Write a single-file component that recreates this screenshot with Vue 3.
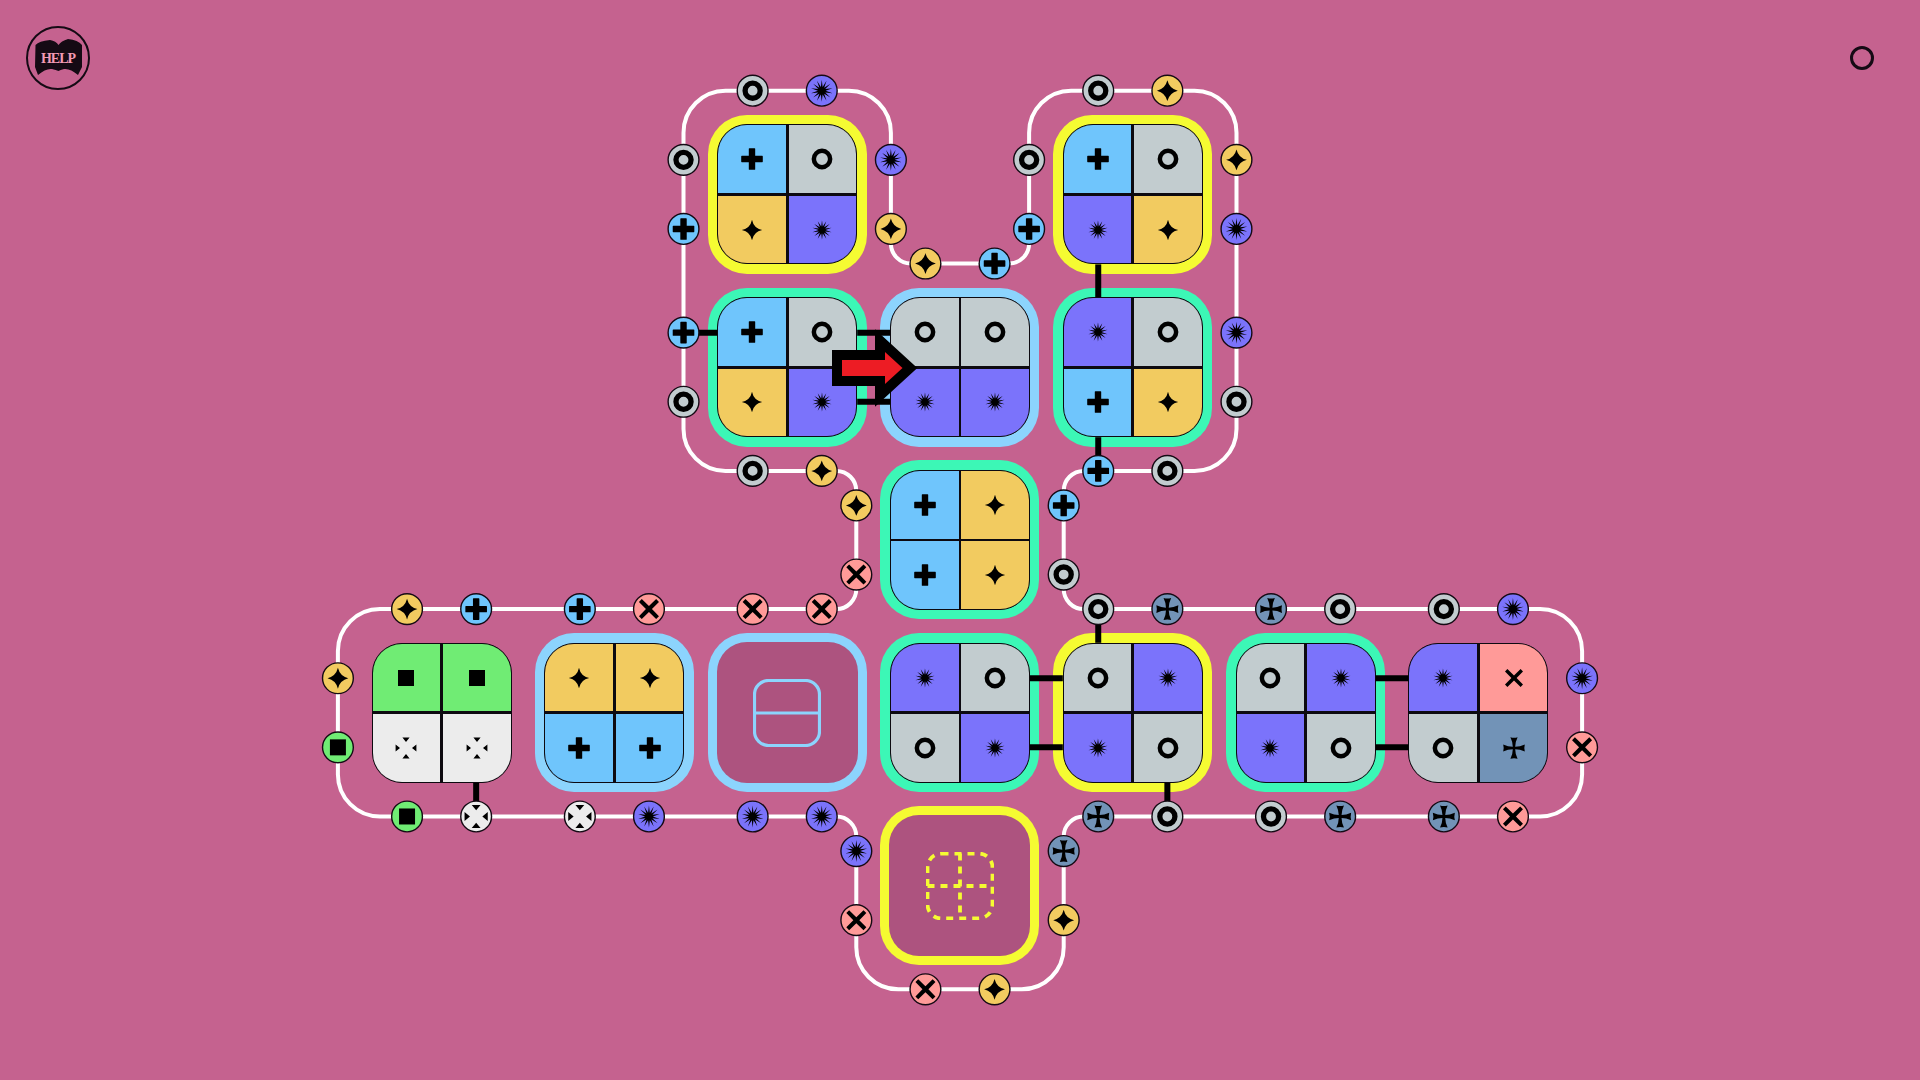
<script setup>
const P = 172.8
const X = (u) => 960 + P * u
const Y = (u) => 540 + P * u

const burst = (outer, inner, n) => {
  let d = ''
  for (let i = 0; i < n * 2; i++) {
    const a = (i * Math.PI) / n
    const r = i % 2 ? inner : outer
    d += (i ? 'L' : 'M') + (r * Math.sin(a)).toFixed(2) + ',' + (-r * Math.cos(a)).toFixed(2)
  }
  return d + 'Z'
}

const ring = (o, i) =>
  `M${-o},0A${o},${o} 0 1,1 ${o},0A${o},${o} 0 1,1 ${-o},0ZM${-i},0A${i},${i} 0 1,0 ${i},0A${i},${i} 0 1,0 ${-i},0Z`

const GLYPH = {
  plus: 'M-3.2,-10.2Q-3.2,-10.8 -2.6,-10.8H2.6Q3.2,-10.8 3.2,-10.2V-3.2H10.2Q10.8,-3.2 10.8,-2.6V2.6Q10.8,3.2 10.2,3.2H3.2V10.2Q3.2,10.8 2.6,10.8H-2.6Q-3.2,10.8 -3.2,10.2V3.2H-10.2Q-10.8,3.2 -10.8,2.6V-2.6Q-10.8,-3.2 -10.2,-3.2H-3.2Z',
  ring: ring(10.4, 5.9),
  star: 'M0,-10.2Q1.7,-1.7 10.2,0Q1.7,1.7 0,10.2Q-1.7,1.7 -10.2,0Q-1.7,-1.7 0,-10.2Z',
  burst: burst(9.8, 3.5, 14),
  square: 'M-8,-8H8V8H-8Z',
  x: 'M-6.6,-9L0,-2.6L6.6,-9L9,-6.6L2.6,0L9,6.6L6.6,9L0,2.6L-6.6,9L-9,6.6L-2.6,0L-9,-6.6Z',
  four: 'M-3.6,-10.8Q0,-9.8 3.6,-10.8Q1.2,-6 1.2,-1.2Q6,-1.2 10.8,-3.6Q9.8,0 10.8,3.6Q6,1.2 1.2,1.2Q1.2,6 3.6,10.8Q0,9.8 -3.6,10.8Q-1.2,6 -1.2,1.2Q-6,1.2 -10.8,3.6Q-9.8,0 -10.8,-3.6Q-6,-1.2 -1.2,-1.2Q-1.2,-6 -3.6,-10.8Z',
  tri: 'M-3.6,-10.4H3.6L0,-6ZM-3.6,10.4H3.6L0,6ZM-10.4,-3.6V3.6L-6,0ZM10.4,-3.6V3.6L6,0Z',
}
const PORT_GLYPH = {
  ...GLYPH,
  ring: ring(10.2, 4.9),
  burst: burst(11, 3.9, 14),
  star: 'M0,-10.4Q2,-2 10.4,0Q2,2 0,10.4Q-2,2 -10.4,0Q-2,-2 0,-10.4Z',
  x: 'M-7.2,-10L0,-3L7.2,-10L10,-7.2L3,0L10,7.2L7.2,10L0,3L-7.2,10L-10,7.2L-3,0L-10,-7.2Z',
  tri: 'M-4.4,-11.6H4.4L0,-6.2ZM-4.4,11.6H4.4L0,6.2ZM-11.6,-4.4V4.4L-6.2,0ZM11.6,-4.4V4.4L6.2,0Z',
  four: 'M-3.8,-11Q0,-10 3.8,-11Q1.4,-6 1.4,-1.4Q6,-1.4 11,-3.8Q10,0 11,3.8Q6,1.4 1.4,1.4Q1.4,6 3.8,11Q0,10 -3.8,11Q-1.4,6 -1.4,1.4Q-6,1.4 -11,3.8Q-10,0 -11,-3.8Q-6,-1.4 -1.4,-1.4Q-1.4,-6 -3.8,-11Z',
}

const tiles = [
  { c: -1, r: -2, b: 'yellow', cells: ['plus', 'ring', 'star', 'burst'] },
  { c: 1, r: -2, b: 'yellow', cells: ['plus', 'ring', 'burst', 'star'] },
  { c: -1, r: -1, b: 'teal', cells: ['plus', 'ring', 'star', 'burst'] },
  { c: 0, r: -1, b: 'sky', cells: ['ring', 'ring', 'burst', 'burst'] },
  { c: 1, r: -1, b: 'teal', cells: ['burst', 'ring', 'plus', 'star'] },
  { c: 0, r: 0, b: 'teal', cells: ['plus', 'star', 'plus', 'star'] },
  { c: -3, r: 1, b: 'none', cells: ['square', 'square', 'tri', 'tri'] },
  { c: -2, r: 1, b: 'sky', cells: ['star', 'star', 'plus', 'plus'] },
  { c: -1, r: 1, b: 'sky', slot: 'split' },
  { c: 0, r: 1, b: 'teal', cells: ['burst', 'ring', 'ring', 'burst'] },
  { c: 1, r: 1, b: 'yellow', cells: ['ring', 'burst', 'burst', 'ring'] },
  { c: 2, r: 1, b: 'teal', cells: ['ring', 'burst', 'burst', 'ring'] },
  { c: 3, r: 1, b: 'none', cells: ['burst', 'x', 'ring', 'four'] },
  { c: 0, r: 2, b: 'yellow', slot: 'dashed' },
]

const ports = [
  [-1.2, -2.6, 'ring'], [-0.8, -2.6, 'burst'],
  [-1.6, -2.2, 'ring'], [-1.6, -1.8, 'plus'], [-1.6, -1.2, 'plus'], [-1.6, -0.8, 'ring'],
  [-1.2, -0.4, 'ring'], [-0.8, -0.4, 'star'], [-0.6, -0.2, 'star'], [-0.6, 0.2, 'x'],
  [-0.8, 0.4, 'x'], [-1.2, 0.4, 'x'], [-1.8, 0.4, 'x'], [-2.2, 0.4, 'plus'], [-2.8, 0.4, 'plus'], [-3.2, 0.4, 'star'],
  [-3.6, 0.8, 'star'], [-3.6, 1.2, 'square'],
  [-3.2, 1.6, 'square'], [-2.8, 1.6, 'tri'], [-2.2, 1.6, 'tri'], [-1.8, 1.6, 'burst'], [-1.2, 1.6, 'burst'], [-0.8, 1.6, 'burst'],
  [-0.6, 1.8, 'burst'], [-0.6, 2.2, 'x'], [-0.2, 2.6, 'x'], [0.2, 2.6, 'star'], [0.6, 2.2, 'star'], [0.6, 1.8, 'four'],
  [0.8, 1.6, 'four'], [1.2, 1.6, 'ring'], [1.8, 1.6, 'ring'], [2.2, 1.6, 'four'], [2.8, 1.6, 'four'], [3.2, 1.6, 'x'],
  [3.6, 1.2, 'x'], [3.6, 0.8, 'burst'],
  [3.2, 0.4, 'burst'], [2.8, 0.4, 'ring'], [2.2, 0.4, 'ring'], [1.8, 0.4, 'four'], [1.2, 0.4, 'four'], [0.8, 0.4, 'ring'],
  [0.6, 0.2, 'ring'], [0.6, -0.2, 'plus'], [0.8, -0.4, 'plus'], [1.2, -0.4, 'ring'],
  [1.6, -0.8, 'ring'], [1.6, -1.2, 'burst'], [1.6, -1.8, 'burst'], [1.6, -2.2, 'star'],
  [1.2, -2.6, 'star'], [0.8, -2.6, 'ring'], [0.4, -2.2, 'ring'], [0.4, -1.8, 'plus'],
  [0.2, -1.6, 'plus'], [-0.2, -1.6, 'star'], [-0.4, -1.8, 'star'], [-0.4, -2.2, 'burst'],
]

const links = [
  [-1.6, -1.2, -1.405, -1.2],
  [-0.595, -1.2, -0.405, -1.2],
  [-0.595, -0.8, -0.405, -0.8],
  [0.8, -1.595, 0.8, -1.405],
  [0.8, -0.595, 0.8, -0.4],
  [0.405, 0.8, 0.595, 0.8],
  [0.405, 1.2, 0.595, 1.2],
  [0.8, 0.4, 0.8, 0.595],
  [1.2, 1.405, 1.2, 1.6],
  [2.405, 0.8, 2.595, 0.8],
  [2.405, 1.2, 2.595, 1.2],
  [-2.8, 1.405, -2.8, 1.6],
]

const R = 42
const r = 20
const verts = [
  [-1.6, -2.6, R], [-0.4, -2.6, R], [-0.4, -1.6, r], [0.4, -1.6, r], [0.4, -2.6, R], [1.6, -2.6, R],
  [1.6, -0.4, R], [0.6, -0.4, r], [0.6, 0.4, r], [3.6, 0.4, R], [3.6, 1.6, R], [0.6, 1.6, r],
  [0.6, 2.6, R], [-0.6, 2.6, R], [-0.6, 1.6, r], [-3.6, 1.6, R], [-3.6, 0.4, R], [-0.6, 0.4, r],
  [-0.6, -0.4, r], [-1.6, -0.4, R],
]
const railPath = (() => {
  const n = verts.length
  let d = ''
  verts.forEach((v, i) => {
    const p = verts[(i + n - 1) % n]
    const q = verts[(i + 1) % n]
    const [x, y] = [X(v[0]), Y(v[1])]
    const [px, py] = [X(p[0]), Y(p[1])]
    const [qx, qy] = [X(q[0]), Y(q[1])]
    const la = Math.hypot(px - x, py - y)
    const lb = Math.hypot(qx - x, qy - y)
    const ax = x + ((px - x) / la) * v[2]
    const ay = y + ((py - y) / la) * v[2]
    const bx = x + ((qx - x) / lb) * v[2]
    const by = y + ((qy - y) / lb) * v[2]
    const cross = (x - px) * (qy - y) - (y - py) * (qx - x)
    d += `${i ? 'L' : 'M'}${ax.toFixed(1)},${ay.toFixed(1)}A${v[2]},${v[2]} 0 0,${cross > 0 ? 1 : 0} ${bx.toFixed(1)},${by.toFixed(1)}`
  })
  return d + 'Z'
})()
</script>

<template>
  <main class="page">
    <section class="board">
      <div
        v-for="t in tiles"
        :key="`${t.c}:${t.r}`"
        class="tile"
        :class="[`edge-${t.b}`, { empty: t.slot }]"
        :style="{ gridColumn: t.c + 4, gridRow: t.r + 3 }"
      >
        <div v-if="t.cells" class="piece">
          <div v-for="(g, i) in t.cells" :key="i" class="cell" :class="`k-${g}`">
            <svg class="glyph" viewBox="-12 -12 24 24"><path :d="GLYPH[g]" fill-rule="evenodd" /></svg>
          </div>
        </div>
        <svg v-else-if="t.slot === 'split'" class="slot" viewBox="0 0 68 68">
          <rect x="1.5" y="1.5" width="65" height="65" rx="14" />
          <path d="M1.5 34H66.5" />
        </svg>
        <svg v-else class="slot dashed" viewBox="0 0 68 68">
          <rect x="1.5" y="1.5" width="65" height="65" rx="14" />
          <path d="M1.5 34H66.5M34 1.5V66.5" />
        </svg>
      </div>
    </section>

    <svg class="overlay" viewBox="0 0 1920 1080">
      <path class="rail" :d="railPath" />
      <line
        v-for="(l, i) in links"
        :key="i"
        class="link"
        :x1="X(l[0])"
        :y1="Y(l[1])"
        :x2="X(l[2])"
        :y2="Y(l[3])"
      />
      <g v-for="(p, i) in ports" :key="i" :transform="`translate(${X(p[0])} ${Y(p[1])})`">
        <circle class="port" :class="`k-${p[2]}`" r="15.4" />
        <path :d="PORT_GLYPH[p[2]]" fill-rule="evenodd" />
      </g>
      <polygon class="arrow" points="842,360 885,360 885,352 902.5,368 885,384 885,376 842,376" />
    </svg>

    <button class="help" type="button" aria-label="Help">
      <svg viewBox="0 0 64 64">
        <circle cx="32" cy="32" r="31" class="help-ring" />
        <path class="help-book" d="M9.5 19Q13 15 24 14Q30 15 32.5 19Q35 15 42 13Q52 14 56 19L56 41L52 49Q44 42 38 43Q34 44 32.5 45Q30 44 26 43Q20 42 12 49L9 41Z" />
        <text x="32.5" y="37" class="help-text" textLength="35" lengthAdjust="spacing">HELP</text>
      </svg>
    </button>
    <span class="dot"></span>
  </main>
</template>

<style>
html, body { margin: 0; background: #c5628f; }
</style>

<style scoped>
.page {
  position: relative;
  width: 1920px;
  height: 1080px;
  overflow: hidden;
  background: #c5628f;
  display: flex;
  align-items: center;
  justify-content: center;
}
.board {
  display: grid;
  grid-template-columns: repeat(7, 172.8px);
  grid-template-rows: repeat(5, 172.8px);
}
.tile {
  box-sizing: border-box;
  width: 159px;
  height: 159px;
  border-radius: 39px;
  place-self: center;
  display: flex;
  align-items: center;
  justify-content: center;
}
.edge-yellow { background: #f5fb32; }
.edge-teal { background: #3cf7b6; }
.edge-sky { background: #8cd4fd; }
.edge-none { background: transparent; }
.empty { position: relative; }
.empty::before {
  content: "";
  position: absolute;
  inset: 9px;
  border-radius: 30px;
  background: #ad537f;
}
.piece {
  box-sizing: border-box;
  width: 140px;
  height: 140px;
  border: 1.5px solid #0d0a10;
  border-radius: 30px;
  background: #0d0a10;
  overflow: hidden;
  display: grid;
  grid-template-columns: 1fr 1fr;
  grid-template-rows: 1fr 1fr;
  gap: 2.8px;
}
.cell { display: flex; align-items: center; justify-content: center; }
.glyph { width: 24px; height: 24px; fill: #000; }
.k-plus { background: #6fc5fc; fill: #6fc5fc; }
.k-ring { background: #c2cccf; fill: #c2cccf; }
.k-star { background: #f2cb60; fill: #f2cb60; }
.k-burst { background: #7b73fb; fill: #7b73fb; }
.k-square { background: #70ec74; fill: #70ec74; }
.k-tri { background: #ececec; fill: #ececec; }
.k-x { background: #ff9a98; fill: #ff9a98; }
.k-four { background: #7293b7; fill: #7293b7; }
.slot {
  position: relative;
  width: 68px;
  height: 68px;
  fill: none;
  stroke: #8cd4fd;
  stroke-width: 3.2px;
}
.dashed {
  stroke: #f5fb32;
  stroke-width: 3.8px;
  stroke-dasharray: 7 6;
}
.overlay {
  position: absolute;
  inset: 0;
  width: 1920px;
  height: 1080px;
  pointer-events: none;
}
.rail { fill: none; stroke: #fff; stroke-width: 4px; }
.link { stroke: #000; stroke-width: 6px; }
.port { stroke: #150a14; stroke-width: 1.4px; }
.arrow {
  fill: #ed1c24;
  stroke: #000;
  stroke-width: 20px;
  stroke-linejoin: miter;
  stroke-miterlimit: 6;
  paint-order: stroke;
}
.help {
  position: absolute;
  left: 26px;
  top: 26px;
  width: 64px;
  height: 64px;
  padding: 0;
  border: 0;
  background: none;
}
.help svg { display: block; width: 64px; height: 64px; }
.help-ring { fill: none; stroke: #150a14; stroke-width: 2px; }
.help-book { fill: #150a14; }
.help-text {
  fill: #f29ab5;
  font-family: "Liberation Serif", serif;
  font-weight: 700;
  font-size: 14px;
  text-anchor: middle;
}
.dot {
  position: absolute;
  left: 1849.5px;
  top: 46px;
  box-sizing: border-box;
  width: 24px;
  height: 24px;
  border: 3px solid #150a14;
  border-radius: 50%;
}
</style>
